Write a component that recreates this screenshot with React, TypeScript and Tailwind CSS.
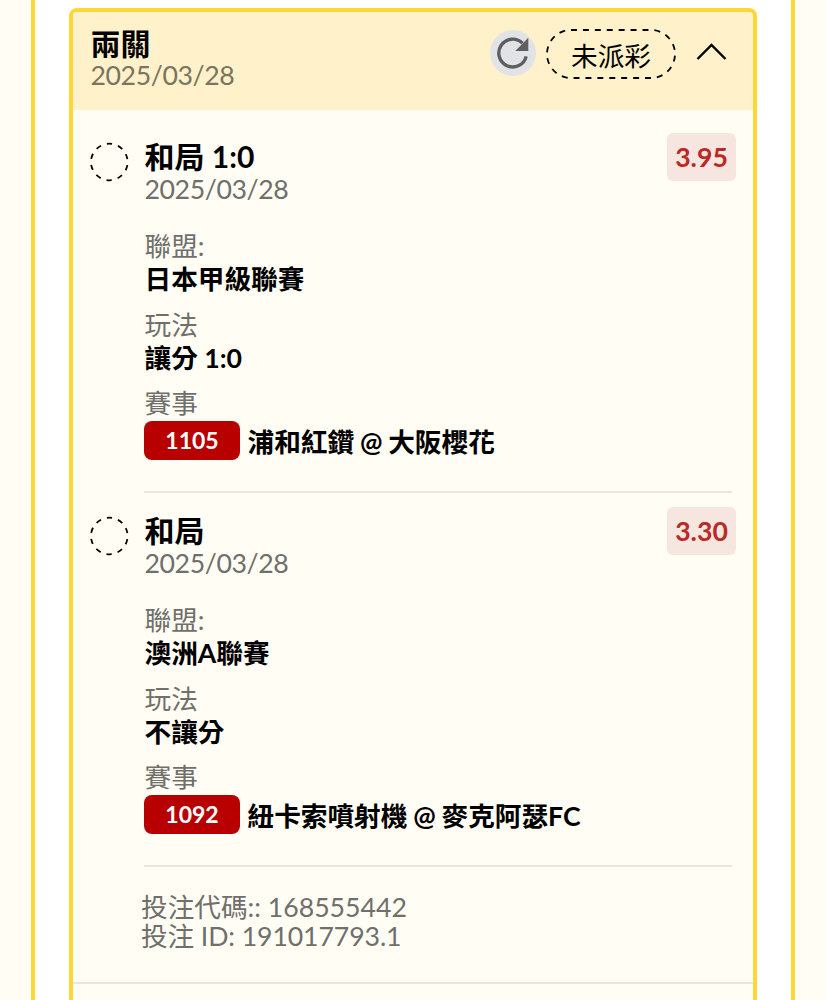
import { useState } from "react";

type Leg = {
    pick: string,
    date: string,
    odds: string,
    league: string,
    play: string,
    code: string,
    match: string
}

const legs: Leg[] = [
    { pick: '和局 1:0', date: '2025/03/28', odds: '3.95', league: '日本甲級聯賽', play: '讓分 1:0', code: '1105', match: '浦和紅鑽 @ 大阪櫻花' },
    { pick: '和局', date: '2025/03/28', odds: '3.30', league: '澳洲A聯賽', play: '不讓分', code: '1092', match: '紐卡索噴射機 @ 麥克阿瑟FC' },
]

const Field = ({ label, value }: { label: string, value: string }) => (
    <div className="h-[78.5px]">
        <div className="h-[33px] leading-[33px] text-[#6f6f6b]">{label}</div>
        <div className="h-[33px] leading-[33px] font-bold">{value}</div>
    </div>
)

const PendingCircle = () => (
    <svg width="40" height="40" viewBox="0 0 40 40" fill="none" className="block">
        <circle cx="20.3" cy="20" r="18.3" stroke="black" strokeWidth="1.8" pathLength="120" strokeDasharray="5.6 6.4" strokeDashoffset="-3.4" />
    </svg>
)

const LegRow = ({ leg }: { leg: Leg }) => (
    <div className="flex h-[374px] pt-[14.5px]">
        <div className="w-[55px] shrink-0 pt-2"><PendingCircle /></div>
        <div className="w-[588px] h-[359px] shrink-0 border-b-2 border-[#e7e6e0]">
            <div className="flex h-[96.5px] justify-between">
                <div className="pl-[0.5px] pt-[6px]">
                    <div className="h-[33px] leading-[33px] text-[30px] font-bold">{leg.pick}</div>
                    <div className="h-[32px] leading-[32px] tracking-[-0.4px] text-[#6f6f6b]">{leg.date}</div>
                </div>
                <div className="-mr-1 -mt-[0.5px] flex h-12 w-[69px] items-center justify-center rounded-md bg-[#f7e6e0] font-bold text-[#b92b27]">{leg.odds}</div>
            </div>
            <div className="pl-[0.5px]">
                <Field label="聯盟:" value={leg.league} />
                <Field label="玩法" value={leg.play} />
                <div className="h-[34px] leading-[32px] text-[#6f6f6b]">賽事</div>
            </div>
            <div className="flex h-[39px] items-center gap-[7.5px]">
                <div className="flex h-[39px] w-24 items-center justify-center rounded-lg bg-[#b80000] text-[23px] font-bold text-white">{leg.code}</div>
                <div className="mt-[2px] font-bold whitespace-nowrap [word-spacing:-0.7px]">{leg.match}</div>
            </div>
        </div>
    </div>
)

export default function App() {
    const [open, setOpen] = useState(true)

    return (
        <div className="flex h-[1000px] w-[826px] overflow-hidden bg-[#fffdf4] text-[26.67px] text-black font-[Lato,'Noto_Sans_CJK_TC',sans-serif]">
            <div className="ml-[31px] h-full w-[764px] border-x-4 border-[#fdd835] bg-white px-[34px] pt-2">
                <div className="h-[1010px] overflow-hidden rounded-lg border-4 border-[#fdd835] bg-[#fffdf4]">
                    <div className="flex h-[98px] justify-between bg-[#fff1ca] pl-[17.5px] pr-[26px] pt-[15px]">
                        <div>
                            <div className="h-[32px] leading-[32px] text-[30px] font-bold">兩關</div>
                            <div className="h-[32px] leading-[32px] tracking-[-0.4px] text-[#7a7460]">2025/03/28</div>
                        </div>
                        <div className="mt-[2px] flex h-[50px] items-center">
                            <div className="-mt-[3px] flex size-[46px] items-center justify-center rounded-full bg-[#e2e3e7]">
                                <svg width="32" height="32" viewBox="0 0 32 32" fill="none">
                                    <path d="M29.2 19.3A13.9 13.9 0 1 1 25.5 6.2" stroke="#5f5f5f" strokeWidth="3.4" />
                                    <path d="M31.3.7v13.3h-13z" fill="#5f5f5f" />
                                </svg>
                            </div>
                            <div className="relative ml-[10px] flex h-[50px] w-[130px] items-center justify-center pt-1">
                                <svg className="absolute inset-0" width="130" height="50" fill="none">
                                    <rect x="1" y="1" width="128" height="48" rx="24" stroke="black" strokeWidth="1.8" pathLength="312" strokeDasharray="6 6" />
                                </svg>
                                <span>未派彩</span>
                            </div>
                            <button className="ml-5 -mt-1" onClick={() => setOpen(!open)}>
                                <svg width="31" height="18" viewBox="0 0 31 18" fill="none">
                                    <path d="M1.5 16 15.5 2l14 14" stroke="black" strokeWidth="2.4" />
                                </svg>
                            </button>
                        </div>
                    </div>
                    {open && <div className="pl-4">
                        <div className="pt-[9px]">
                            {legs.map((leg) => <LegRow key={leg.code} leg={leg} />)}
                        </div>
                        <div className="ml-[52px] pt-[26px] leading-[29px] text-[#6f6f6b]">
                            <div>投注代碼:: 168555442</div>
                            <div className="tracking-[-0.1px]">投注 ID: 191017793.1</div>
                        </div>
                        <div className="-ml-4 mt-[31px] border-t-2 border-[#e7e6e0]" />
                    </div>}
                </div>
            </div>
        </div>
    );
}
